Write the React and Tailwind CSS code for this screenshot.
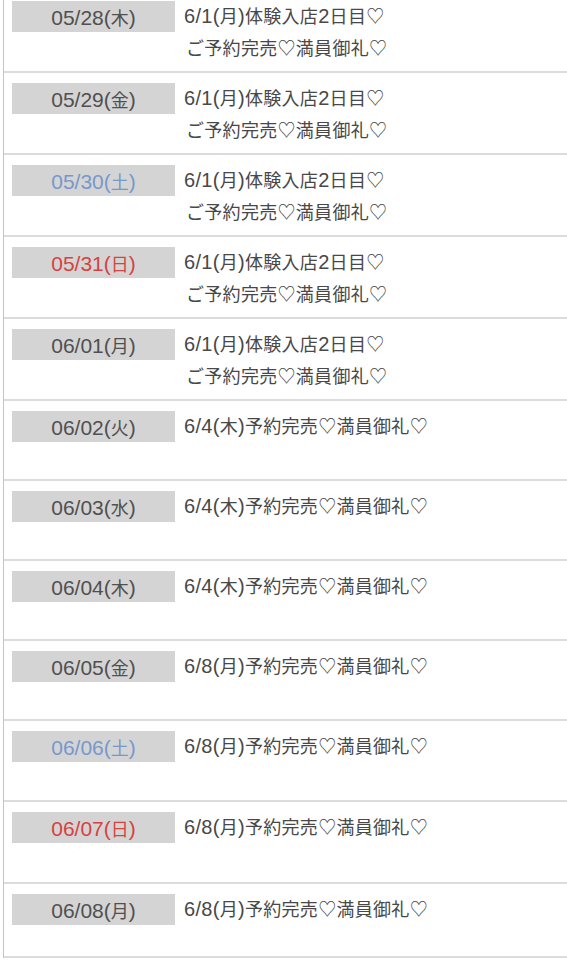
const rows = [
  { date: '05/28(木)', color: 'text-[#505050]', lines: ['6/1(月)体験入店2日目♡', 'ご予約完売♡満員御礼♡'], h: 'h-[82px]' },
  { date: '05/29(金)', color: 'text-[#505050]', lines: ['6/1(月)体験入店2日目♡', 'ご予約完売♡満員御礼♡'], h: 'h-[82px]' },
  { date: '05/30(土)', color: 'text-[#7898cc]', lines: ['6/1(月)体験入店2日目♡', 'ご予約完売♡満員御礼♡'], h: 'h-[82px]' },
  { date: '05/31(日)', color: 'text-[#d6423f]', lines: ['6/1(月)体験入店2日目♡', 'ご予約完売♡満員御礼♡'], h: 'h-[82px]' },
  { date: '06/01(月)', color: 'text-[#505050]', lines: ['6/1(月)体験入店2日目♡', 'ご予約完売♡満員御礼♡'], h: 'h-[82px]' },
  { date: '06/02(火)', color: 'text-[#505050]', lines: ['6/4(木)予約完売♡満員御礼♡'], h: 'h-[80px]' },
  { date: '06/03(水)', color: 'text-[#505050]', lines: ['6/4(木)予約完売♡満員御礼♡'], h: 'h-[80px]' },
  { date: '06/04(木)', color: 'text-[#505050]', lines: ['6/4(木)予約完売♡満員御礼♡'], h: 'h-[80px]' },
  { date: '06/05(金)', color: 'text-[#505050]', lines: ['6/8(月)予約完売♡満員御礼♡'], h: 'h-[80px]' },
  { date: '06/06(土)', color: 'text-[#7898cc]', lines: ['6/8(月)予約完売♡満員御礼♡'], h: 'h-[81px]' },
  { date: '06/07(日)', color: 'text-[#d6423f]', lines: ['6/8(月)予約完売♡満員御礼♡'], h: 'h-[82px]' },
  { date: '06/08(月)', color: 'text-[#505050]', lines: ['6/8(月)予約完売♡満員御礼♡'], h: 'h-[74px]' },
];

// latin runs are set a bit larger so digits match the width of the original's font
const Mixed = ({ text, latin }) =>
  text.split(/([0-9/()]+)/).map((part, i) =>
    /[0-9/()]/.test(part) ? (
      <span key={i} className={`${latin} leading-none`}>{part}</span>
    ) : (
      <span key={i}>{part}</span>
    )
  );

const ScheduleRow = ({ row }) => (
  <div className={`flex items-start gap-[9px] pl-[8px] pt-[10px] border-b-2 border-[#dcdcdc] ${row.h}`}>
    <div className={`w-[163px] h-[31px] shrink-0 bg-[#d4d4d4] flex items-center justify-center text-[18px] leading-none pt-[1px] ${row.color}`}>
      <span><Mixed text={row.date} latin="text-[21px]" /></span>
    </div>
    <div className="text-[18px] leading-[32px] tracking-[0.3px] text-[#484848]">
      {row.lines.map((line, i) => (
        <p key={i} className={i > 0 ? 'pl-[2px]' : ''}><Mixed text={line} latin="text-[20px]" /></p>
      ))}
    </div>
  </div>
);

const App = () => {
  return (
    <div
      className="w-[567px] h-[960px] overflow-hidden bg-white"
      style={{ fontFamily: '"Liberation Sans", "Noto Sans CJK JP", sans-serif' }}
    >
      <div className="-mt-[9px] ml-[3px] border-l border-[#c4c4c4]">
        {rows.map((row, i) => (
          <ScheduleRow key={i} row={row} />
        ))}
      </div>
    </div>
  );
};

export default App;
